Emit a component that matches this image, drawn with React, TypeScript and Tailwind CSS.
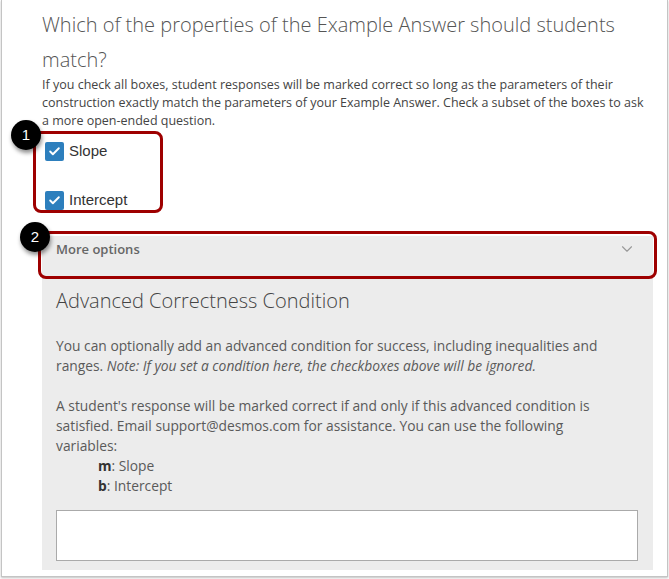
import React from "react";
import { ChevronDown, Check } from "lucide-react";

const openSans = { fontFamily: '"Open Sans", "Liberation Sans", sans-serif' };

function Badge({ n, className }: { n: number; className: string }) {
  return (
    <div
      className={`absolute flex h-[30px] w-[30px] items-center justify-center rounded-full bg-black text-[15px] text-white shadow-[1px_3px_4px_rgba(0,0,0,0.45)] ${className}`}
      style={{ fontFamily: '"Liberation Sans", Arial, sans-serif' }}
    >
      {n}
    </div>
  );
}

function CheckRow({ label }: { label: string }) {
  return (
    <div className="flex h-[19px] items-center gap-[5px]">
      <div className="flex h-[19px] w-[19px] items-center justify-center rounded-[2px] bg-[#2d7fbd]">
        <Check size={13} strokeWidth={3.5} className="text-white" />
      </div>
      <span className="text-[15px] text-[#333]" style={{ fontFamily: '"Liberation Sans", Arial, sans-serif' }}>
        {label}
      </span>
    </div>
  );
}

export default function App() {
  return (
    <div className="relative h-[579px] w-[669px] overflow-hidden bg-white">
      <div
        className="relative ml-[1px] h-[577px] w-[667px] border-x border-b border-[#c4c4c4] shadow-[0_1px_2px_rgba(0,0,0,0.25)]"
        style={openSans}
      >
        <div className="pl-[40px] pr-[14px] pt-[7px]">
          <h1 className="text-[20px] leading-[35px] font-light text-[#555]">
            Which of the properties of the Example Answer should students match?
          </h1>
          <p className="-mt-[1px] text-[12.5px] leading-[18px] text-[#444]">
            If you check all boxes, student responses will be marked correct so long as the parameters of their
            construction exactly match the parameters of your Example Answer. Check a subset of the boxes to ask a
            more open-ended question.
          </p>
          <div className="mt-[12px] flex flex-col gap-[30px] pl-[3px]">
            <CheckRow label="Slope" />
            <CheckRow label="Intercept" />
          </div>
        </div>

        <div className="ml-[40px] mr-[14px] mt-[26px] bg-[#ececec] pb-[9px]">
          <div className="flex items-center justify-between pl-[14px] pr-[17px] pt-[4px]">
            <span className="text-[13px] leading-[18px] font-semibold text-[#666]">More options</span>
            <ChevronDown size={18} strokeWidth={1.5} className="text-[#999]" />
          </div>
          <div className="pl-[14px] pr-[15px]">
            <h2 className="mt-[30px] text-[20px] leading-[26px] font-light text-[#444]">
              Advanced Correctness Condition
            </h2>
            <p className="mr-[18px] mt-[22px] text-[13.8px] leading-[20px] text-[#5a5a5a]">
              You can optionally add an advanced condition for success, including inequalities and ranges.{" "}
              <em>Note: If you set a condition here, the checkboxes above will be ignored.</em>
            </p>
            <p className="mr-[18px] mt-[20px] text-[13.8px] leading-[20px] text-[#5a5a5a]">
              A student's response will be marked correct if and only if this advanced condition is satisfied. Email
              support@desmos.com for assistance. You can use the following variables:
            </p>
            <div className="pl-[42px] text-[13.8px] leading-[20px] text-[#5a5a5a]">
              <div>
                <b className="font-bold text-[#333]">m</b>: Slope
              </div>
              <div>
                <b className="font-bold text-[#333]">b</b>: Intercept
              </div>
            </div>
            <div className="mt-[14px] h-[51px] border border-[#aaa] bg-white" />
          </div>
        </div>

        {/* annotation outlines */}
        <div className="absolute left-[31px] top-[131px] h-[82px] w-[130px] rounded-[8px] border-[3px] border-[#9e0000]" />
        <div className="absolute left-[36px] top-[231px] h-[48px] w-[619px] rounded-[8px] border-[3px] border-[#9e0000]" />
        <Badge n={1} className="left-[9px] top-[120px]" />
        <Badge n={2} className="left-[18px] top-[222px]" />
      </div>
    </div>
  );
}
